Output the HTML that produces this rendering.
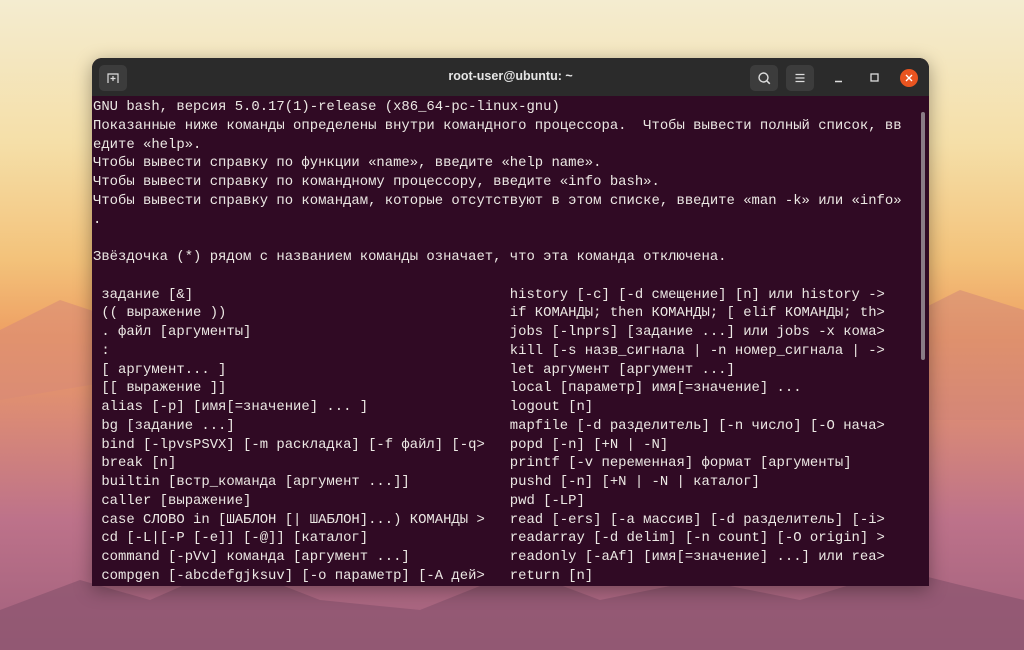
<!DOCTYPE html>
<html><head><meta charset="utf-8"><style>
html,body{margin:0;padding:0;width:1024px;height:650px;overflow:hidden}
body{position:relative;background:linear-gradient(180deg,#f4ecd0 0%,#f5dfa8 22%,#f3c27a 40%,#ee9e62 52%,#da8a76 64%,#bd728a 80%,#a0607c 100%)}
.win{position:absolute;left:92px;top:58px;width:837px;height:528px;background:#300a24;border-radius:10px 10px 0 0;overflow:hidden;box-shadow:0 4px 18px rgba(0,0,0,.35)}
.bar{position:absolute;left:0;top:0;width:837px;height:38px;background:#2b2b2b}
.btn{position:absolute;top:7px;width:28px;height:26px;background:#3c3c3c;border-radius:5px}
.title{position:absolute;left:0;right:0;top:11px;text-align:center;color:#e6e6e6;font:bold 12.5px "Liberation Sans",sans-serif}
pre{position:absolute;left:1px;top:40px;margin:0;font:13.9px/18.75px "Liberation Mono","DejaVu Sans Mono",monospace;color:#ece8e4;white-space:pre}
.sb{position:absolute;left:829px;top:54px;width:4px;height:248px;background:#8a7c86;border-radius:2px}
</style></head><body>
<svg width="1024" height="650" style="position:absolute;left:0;top:0">
<path d="M0 330 L60 300 L120 320 L180 290 L240 330 L300 310 L360 340 L0 400Z" fill="#d98a76" opacity=".6"/>
<path d="M900 320 L960 290 L1024 310 L1024 420 L900 420Z" fill="#d08478" opacity=".5"/>
<path d="M0 610 L80 580 L150 600 L230 565 L320 600 L420 610 L520 570 L600 600 L700 580 L800 600 L900 570 L960 585 L1024 600 L1024 650 L0 650Z" fill="#8f5670" opacity=".8"/>
</svg>
<div class="win">
<div class="bar">
<div class="btn" style="left:7px"><svg width="28" height="26"><path d="M9 18V9h10v9M14 11v5M11.5 13.5h5" stroke="#ddd" stroke-width="1.2" fill="none"/></svg></div>
<div class="title">root-user@ubuntu: ~</div>
<div class="btn" style="left:658px"><svg width="28" height="26"><circle cx="13.5" cy="12.5" r="4.5" stroke="#ddd" stroke-width="1.4" fill="none"/><path d="M16.8 15.8l3 3" stroke="#ddd" stroke-width="1.5"/></svg></div>
<div class="btn" style="left:694px"><svg width="28" height="26"><path d="M9.5 9.5h9M9.5 13h9M9.5 16.5h9" stroke="#ddd" stroke-width="1.3"/></svg></div>
<svg style="position:absolute;left:740px;top:8px" width="90" height="24"><path d="M3 15.5h7" stroke="#ddd" stroke-width="1.4"/><rect x="39" y="8" width="7" height="7" stroke="#ddd" stroke-width="1.3" fill="none"/><circle cx="77" cy="12" r="9" fill="#e95420"/><path d="M74 9l6 6M80 9l-6 6" stroke="#fff" stroke-width="1.4"/></svg>
</div>
<pre>GNU bash, версия 5.0.17(1)-release (x86_64-pc-linux-gnu)
Показанные ниже команды определены внутри командного процессора.  Чтобы вывести полный список, вв
едите «help».
Чтобы вывести справку по функции «name», введите «help name».
Чтобы вывести справку по командному процессору, введите «info bash».
Чтобы вывести справку по командам, которые отсутствуют в этом списке, введите «man -k» или «info»
.

Звёздочка (*) рядом с названием команды означает, что эта команда отключена.

 задание [&amp;]                                      history [-c] [-d смещение] [n] или history -&gt;
 (( выражение ))                                  if КОМАНДЫ; then КОМАНДЫ; [ elif КОМАНДЫ; th&gt;
 . файл [аргументы]                               jobs [-lnprs] [задание ...] или jobs -x кома&gt;
 :                                                kill [-s назв_сигнала | -n номер_сигнала | -&gt;
 [ аргумент... ]                                  let аргумент [аргумент ...]
 [[ выражение ]]                                  local [параметр] имя[=значение] ...
 alias [-p] [имя[=значение] ... ]                 logout [n]
 bg [задание ...]                                 mapfile [-d разделитель] [-n число] [-O нача&gt;
 bind [-lpvsPSVX] [-m раскладка] [-f файл] [-q&gt;   popd [-n] [+N | -N]
 break [n]                                        printf [-v переменная] формат [аргументы]
 builtin [встр_команда [аргумент ...]]            pushd [-n] [+N | -N | каталог]
 caller [выражение]                               pwd [-LP]
 case СЛОВО in [ШАБЛОН [| ШАБЛОН]...) КОМАНДЫ &gt;   read [-ers] [-a массив] [-d разделитель] [-i&gt;
 cd [-L|[-P [-e]] [-@]] [каталог]                 readarray [-d delim] [-n count] [-O origin] &gt;
 command [-pVv] команда [аргумент ...]            readonly [-aAf] [имя[=значение] ...] или rea&gt;
 compgen [-abcdefgjksuv] [-o параметр] [-A дей&gt;   return [n]</pre>
<div class="sb"></div>
</div>
</body></html>
